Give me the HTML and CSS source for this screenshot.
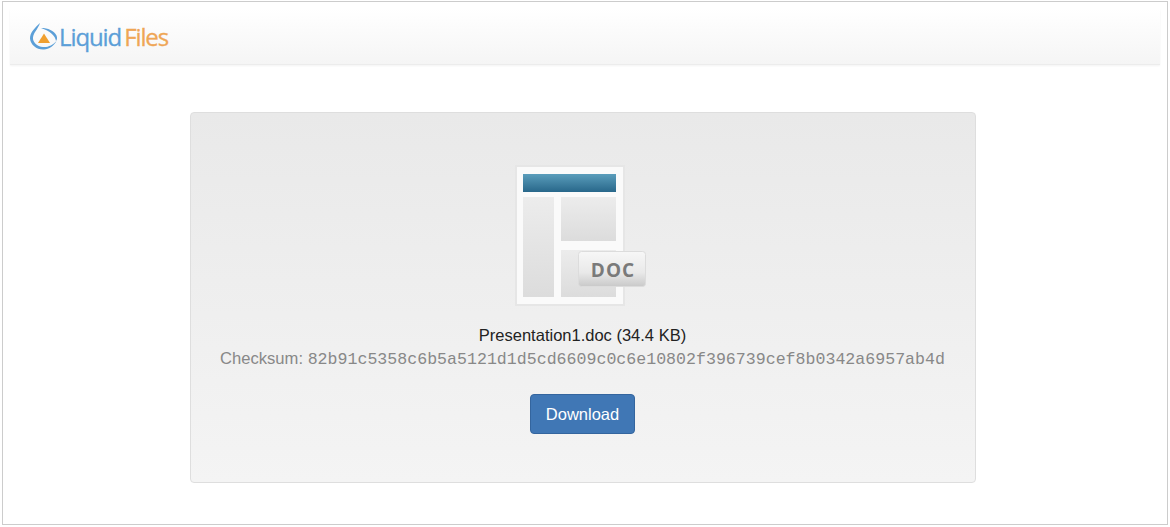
FILE: index.html
```html
<!DOCTYPE html>
<html lang="en">

<head>
    <meta charset="UTF-8">
    <title>LiquidFiles</title>
    <link rel="stylesheet" href="styles.css">
</head>

<body>
    <div class="frame">
        <div class="header">
            <svg class="logo-mark" width="30" height="30" viewBox="0 0 30 30">
                <path d="M11 1 C6 6 1 10 1 16.500 C1.500 23 8 28 15 27.500 C20 27 25 24 27.500 19 C24 23 19 25.500 14 25 C8 24.500 3.500 20 4 15.500 C4.500 10.500 9 7 11 1 Z" fill="#5b9fd8"/>
                <path d="M12 6 C19 6 25 8.500 27.500 13.500 C28.500 16 28 18 27 19 C26.500 14 21 9 12 6 Z" fill="#5b9fd8"/>
                <path d="M15 11.500 L21 21 L9 21 Z" fill="#f0a030"/>
            </svg>
            <span class="logo-text"><span class="logo-blue">Liquid</span><span class="logo-orange">Files</span></span>
        </div>

        <div class="panel">
            <!-- file type icon -->
            <svg class="file-icon" width="134" height="142" viewBox="0 0 134 142">
                <defs>
                    <linearGradient id="bar" x1="0" y1="0" x2="0" y2="1">
                        <stop offset="0" stop-color="#5a9dbb"/>
                        <stop offset="1" stop-color="#28678a"/>
                    </linearGradient>
                    <linearGradient id="block" x1="0" y1="0" x2="0" y2="1">
                        <stop offset="0" stop-color="#ececec"/>
                        <stop offset="1" stop-color="#dcdcdc"/>
                    </linearGradient>
                    <linearGradient id="badge" x1="0" y1="0" x2="0" y2="1">
                        <stop offset="0" stop-color="#f7f7f7"/>
                        <stop offset="0.6" stop-color="#e9e9e9"/>
                        <stop offset="1" stop-color="#c9c9c9"/>
                    </linearGradient>
                </defs>
                <rect x="1" y="1" width="108" height="139" fill="#fafafa" stroke="#e6e6e6" stroke-width="2"/>
                <rect x="8" y="9" width="93" height="18" fill="url(#bar)"/>
                <rect x="8" y="32" width="31" height="100" fill="url(#block)"/>
                <rect x="46" y="32" width="55" height="44" fill="url(#block)"/>
                <rect x="46" y="85" width="55" height="47" fill="url(#block)"/>
                <rect x="63.500" y="86.500" width="67" height="35" rx="3" fill="url(#badge)" stroke="#dcdcdc"/>
                <text class="badge-text" x="98" y="112" text-anchor="middle">DOC</text>
            </svg>
            <div class="file-name">Presentation1.doc (34.4 KB)</div>
            <div class="checksum">Checksum: <span class="hash">82b91c5358c6b5a5121d1d5cd6609c0c6e10802f396739cef8b0342a6957ab4d</span></div>
            <button class="button">Download</button>
        </div>
    </div>
</body>

</html>
```

FILE: styles.css
```css
html,
body {
    margin: 0;
    background: #fff;
}

.frame {
    height: 515px;
    margin: 1px 2px 0;
    padding: 7px 7px 0;
    border: 1px solid #ccc;
    box-sizing: content-box;
    display: flex;
    flex-direction: column;
    align-items: center;
    font-family: "Liberation Sans", Arial, sans-serif;
}

.header {
    align-self: stretch;
    height: 55px;
    padding-left: 19px;
    display: flex;
    align-items: center;
    background: linear-gradient(#ffffff, #f5f5f5);
    border-bottom: 1px solid #ececec;
    box-shadow: 0 1px 2px rgba(0, 0, 0, 0.05);
}

.logo-text {
    font-family: "Open Sans", sans-serif;
    font-size: 24px;
    letter-spacing: -1.100px;
    -webkit-text-stroke: 0.3px;
}

.logo-blue {
    color: #5b9fd8;
    margin-right: 3px;
}

.logo-orange {
    color: #efa655;
}

.panel {
    width: 784px;
    height: 369px;
    margin: 47px 5px 0 0;
    display: flex;
    flex-direction: column;
    align-items: center;
    background: linear-gradient(#e9e9e9, #f4f4f4);
    border: 1px solid #dedede;
    border-radius: 4px;
}

.file-icon {
    margin: 52px 2px 0 0;
    display: block;
}

.badge-text {
    font-family: "Open Sans", sans-serif;
    font-size: 19px;
    font-weight: bold;
    letter-spacing: 1px;
    fill: #7a7a7a;
}

.file-name {
    margin-top: 18px;
    font-size: 16.500px;
    line-height: 20px;
    color: #222;
}

.checksum {
    margin-top: 4px;
    font-size: 16.600px;
    line-height: 20px;
    color: #888;
}

.hash {
    font-family: "Liberation Mono", monospace;
}

.button {
    margin-top: 24px;
    width: 105px;
    height: 40px;
    padding: 0;
    font-family: inherit;
    font-size: 16.500px;
    color: #fff;
    background: #4077b5;
    border: 1px solid #34659e;
    border-radius: 4px;
    cursor: pointer;
}
```
